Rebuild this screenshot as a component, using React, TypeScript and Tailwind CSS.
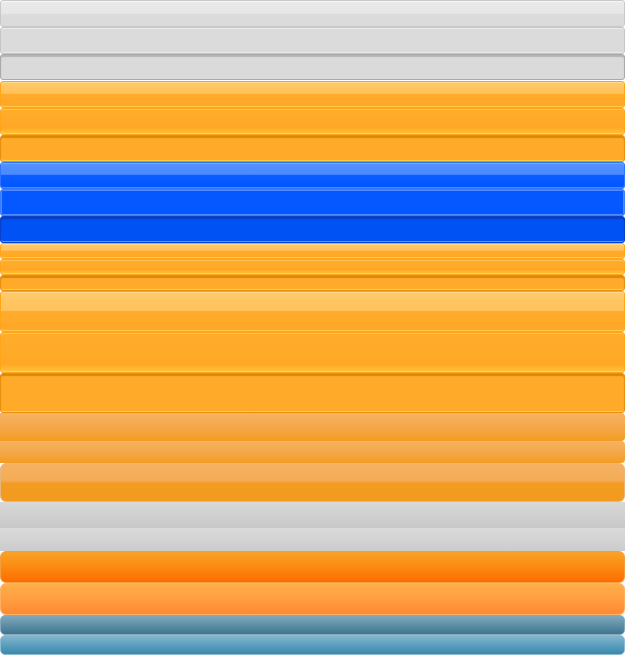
const bars: { h: string; cls: string }[] = [
  // gray: normal / hover / pressed
  { h: 'h-[27px]', cls: 'rounded-[3px] border border-[#c9c9c9] bg-[linear-gradient(to_bottom,#eaeaea_0%,#e6e6e6_50%,#dcdcdc_52%,#dadada_100%)] shadow-[inset_0_1px_0_#f6f6f6]' },
  { h: 'h-[27px]', cls: 'rounded-[3px] border border-[#c6c6c6] bg-[#dbdbdb] shadow-[inset_0_1px_0_#ececec,inset_0_-1px_0_#e8e8e8]' },
  { h: 'h-[27px]', cls: 'rounded-[3px] border border-[#a9a9a9] bg-[#dadada] shadow-[inset_0_2px_1px_#b5b5b5] mb-px' },
  // orange: normal / hover / pressed
  { h: 'h-[27px]', cls: 'rounded-[3px] border border-[#ffa516] bg-[linear-gradient(to_bottom,#ffca6c_0%,#ffc25a_45%,#ffab2b_50%,#ffa726_100%)] shadow-[inset_0_1px_0_#ffd88f,inset_0_-1px_0_#ffc94d]' },
  { h: 'h-[27px]', cls: 'rounded-[3px] border border-[#ffa516] bg-[linear-gradient(to_bottom,#ffad2c_0%,#ffa826_75%,#ffc43a_100%)] shadow-[inset_0_1px_0_#ffc35c,inset_0_-1px_0_#ffd84a]' },
  { h: 'h-[27px]', cls: 'rounded-[3px] border border-[#e8900c] bg-[#ffaa28] shadow-[inset_0_2px_1px_#d9880f,inset_0_-1px_0_#ffd23c]' },
  // blue: normal / hover / pressed
  { h: 'h-[27px]', cls: 'rounded-[3px] border border-[#2f74ff] bg-[linear-gradient(to_bottom,#5592ff_0%,#4a8aff_45%,#0a5dff_50%,#0055ff_100%)] shadow-[inset_0_1px_0_#7aa9ff,inset_0_-1px_0_#4b87ff]' },
  { h: 'h-[27px]', cls: 'rounded-[3px] border border-[#3c7dff] bg-[#0557ff] shadow-[inset_0_0_0_1px_#4d8aff]' },
  { h: 'h-[27px]', cls: 'rounded-[3px] border border-[#0a3fc8] bg-[#0052f5] shadow-[inset_0_2px_1px_#0a3cbe,inset_0_-1px_0_#5b95ff]' },
  // small orange
  { h: 'h-[16px]', cls: 'rounded-[3px] border border-[#ffa516] bg-[linear-gradient(to_bottom,#ffca6c_0%,#ffc25a_45%,#ffab2b_50%,#ffa726_100%)] shadow-[inset_0_1px_0_#ffd88f,inset_0_-1px_0_#ffc94d]' },
  { h: 'h-[16px]', cls: 'rounded-[3px] border border-[#ffa516] bg-[linear-gradient(to_bottom,#ffad2c_0%,#ffa826_70%,#ffc43a_100%)] shadow-[inset_0_1px_0_#ffc35c,inset_0_-1px_0_#ffd84a]' },
  { h: 'h-[16px]', cls: 'rounded-[3px] border border-[#e8900c] bg-[#ffaa28] shadow-[inset_0_2px_1px_#d9880f,inset_0_-1px_0_#ffd23c]' },
  // large orange
  { h: 'h-[41px]', cls: 'rounded-[3px] border border-[#ffa516] bg-[linear-gradient(to_bottom,#ffca6c_0%,#ffc25a_48%,#ffab2b_50%,#ffa726_100%)] shadow-[inset_0_1px_0_#ffd88f,inset_0_-1px_0_#ffc94d]' },
  { h: 'h-[41px]', cls: 'rounded-[3px] border border-[#ffa516] bg-[linear-gradient(to_bottom,#ffad2c_0%,#ffa826_80%,#ffc43a_100%)] shadow-[inset_0_1px_0_#ffc35c,inset_0_-1px_0_#ffd84a]' },
  { h: 'h-[40px]', cls: 'rounded-[3px] border border-[#e8900c] bg-[#ffaa28] shadow-[inset_0_2px_1px_#d9880f,inset_0_-1px_0_#ffd23c]' },
  // flat orange
  { h: 'h-[28px]', cls: 'rounded-r-[4px] bg-[linear-gradient(to_bottom,#f6b262_0%,#f4a84a_50%,#f39c22_100%)]' },
  { h: 'h-[22px]', cls: 'rounded-r-[4px] bg-[linear-gradient(to_bottom,#f6b262_0%,#f4a84a_50%,#f39c22_100%)]' },
  { h: 'h-[39px]', cls: 'rounded-[6px] border border-[#e8b57a] bg-[linear-gradient(to_bottom,#f5b262_0%,#f4ab55_45%,#f39c22_52%,#f39a20_100%)]' },
  // flat gray
  { h: 'h-[26px]', cls: 'bg-[linear-gradient(to_bottom,#d8d8d8_0%,#c8c8c8_100%)]' },
  { h: 'h-[23px]', cls: 'bg-[linear-gradient(to_bottom,#dadada_0%,#cccccc_100%)]' },
  // orange rounded
  { h: 'h-[32px]', cls: 'rounded-[6px] border border-[#f0a040] bg-[linear-gradient(to_bottom,#f9a228_0%,#fb8a12_50%,#ff6c00_100%)]' },
  { h: 'h-[32px]', cls: 'rounded-[6px] border border-[#ffb060] bg-[linear-gradient(to_bottom,#ffae4a_0%,#ff9e40_50%,#ff8a34_100%)]' },
  // steel blue
  { h: 'h-[20px]', cls: 'rounded-[5px] border border-[#86aabb] bg-[linear-gradient(to_bottom,#80a9bc_0%,#5f8fa6_50%,#3f7590_100%)]' },
  { h: 'h-[20px]', cls: 'rounded-[5px] border border-[#8cbbd2] bg-[linear-gradient(to_bottom,#82b6ce_0%,#5c9fbe_50%,#3c88ac_100%)]' },
]

export default function App() {
  return (
    <div className="flex h-[655px] w-[625px] flex-col bg-white">
      {bars.map((b, i) => (
        <div key={i} className={`${b.h} flex w-full shrink-0 flex-col`}>
          <div className={`min-h-0 w-full flex-1 ${b.cls}`} />
        </div>
      ))}
    </div>
  )
}
